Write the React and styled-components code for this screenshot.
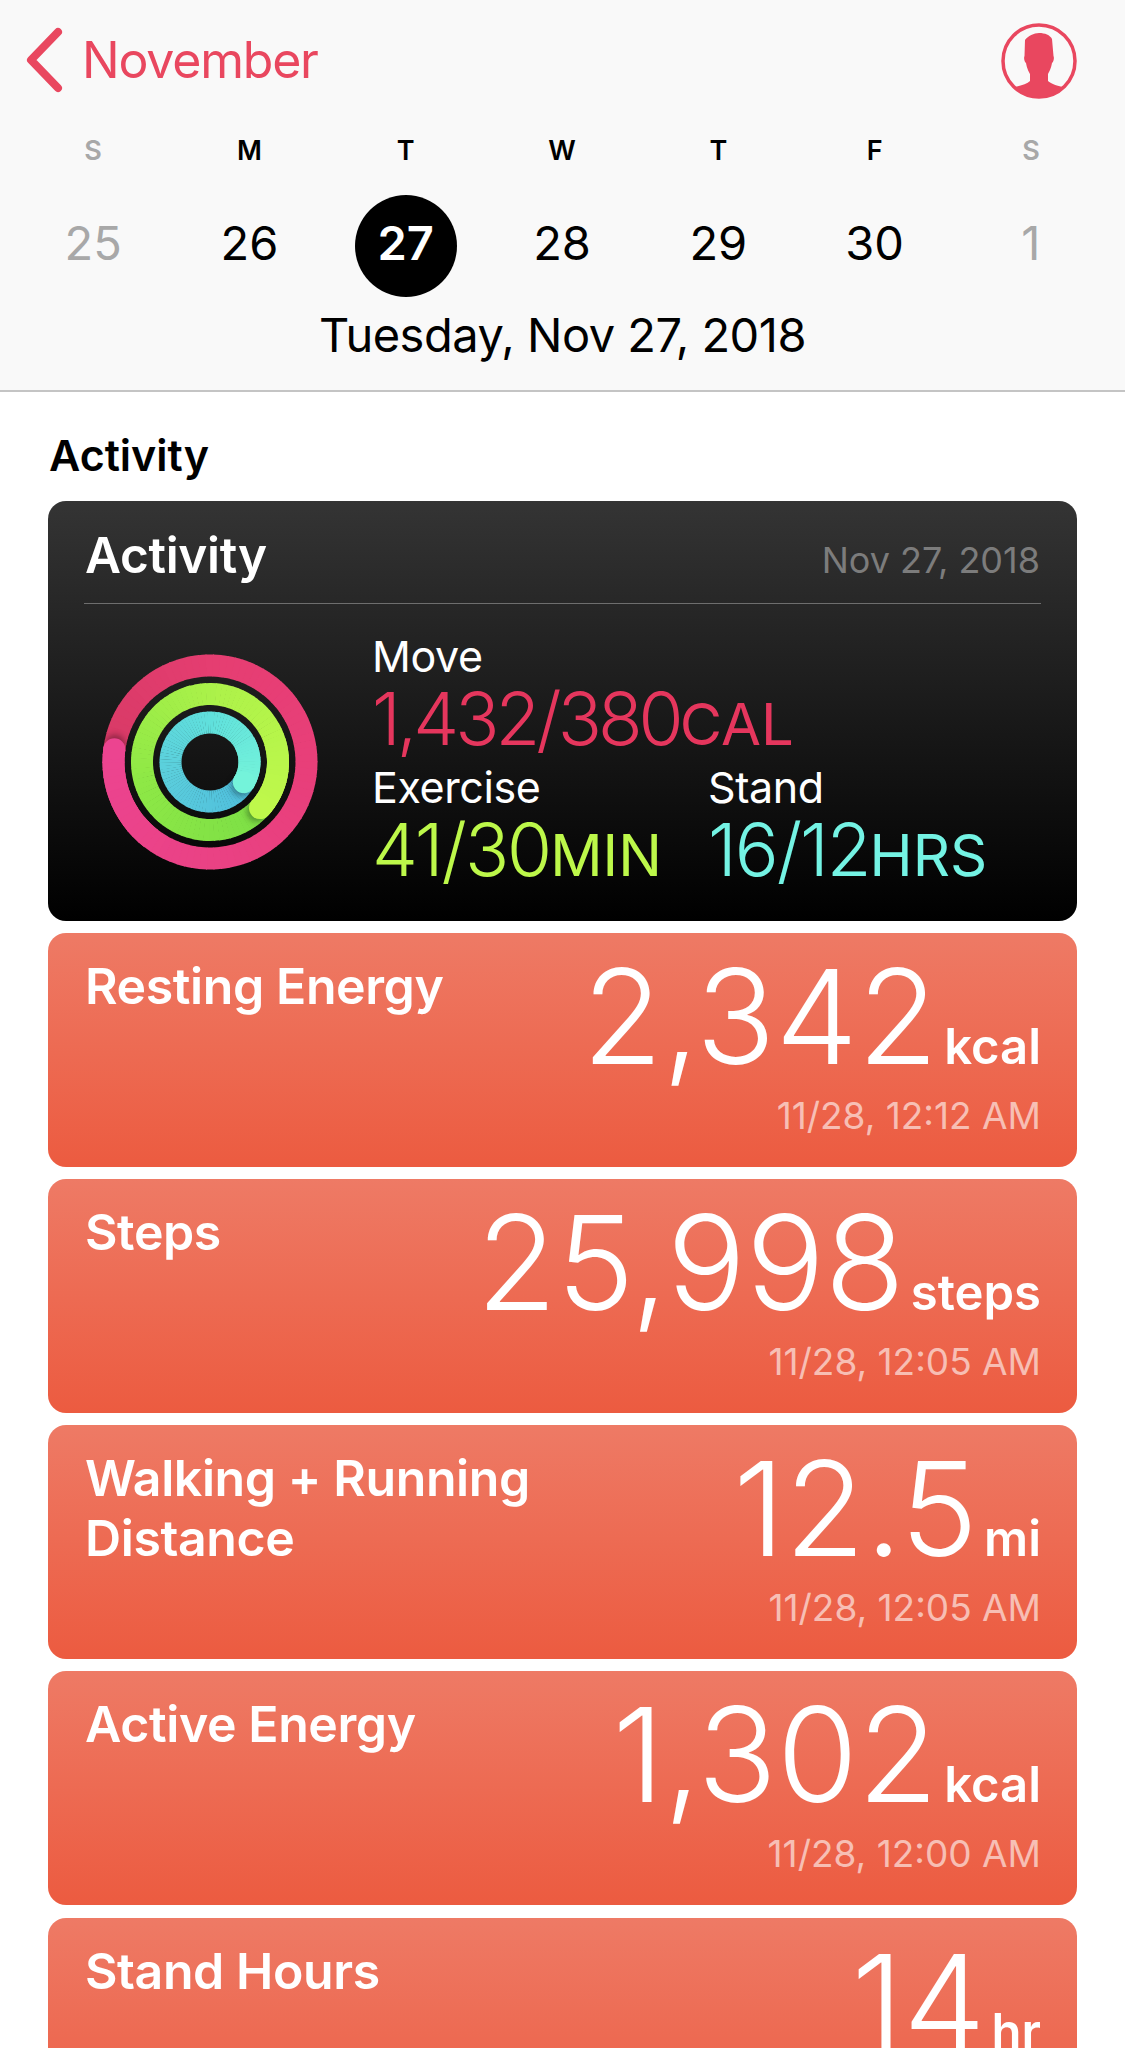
import React from 'react'
import styled, { createGlobalStyle } from 'styled-components'

const GlobalStyle = createGlobalStyle`
  html, body {
    margin: 0;
    padding: 0;
    background: #fff;
  }
  body {
    font-family: Inter, 'Liberation Sans', sans-serif;
  }
`

const Page = styled.div`
  width: 1125px;
  height: 2048px;
  overflow: hidden;
  background: #fff;
`

const Header = styled.header`
  height: 392px;
  box-sizing: border-box;
  background: #f9f9f9;
  border-bottom: 2px solid #c4c4c4;
`

const NavBar = styled.div`
  height: 122px;
  padding: 0 48px 0 24px;
  box-sizing: border-box;
  display: flex;
  align-items: center;
  justify-content: space-between;
`

const BackLink = styled.div`
  display: flex;
  align-items: center;
  gap: 18px;
  color: #e9475f;
  font-size: 50px;
  letter-spacing: -1.2px;
  line-height: 56px;
  padding-bottom: 2px;
`

const WeekGrid = styled.div`
  display: grid;
  grid-template-columns: repeat(7, 156.3px);
  padding-left: 15px;
  justify-items: center;
  align-items: center;
`

const DayLetter = styled.div`
  height: 56px;
  line-height: 58px;
  font-size: 27px;
  font-weight: 600;
  color: ${(p) => (p.$muted ? '#a8a8a8' : '#000')};
`

const DayNumber = styled.div`
  width: 102px;
  height: 102px;
  margin-top: 17px;
  padding-bottom: 8px;
  box-sizing: border-box;
  border-radius: 50%;
  display: flex;
  align-items: center;
  justify-content: center;
  font-size: 47px;
  font-weight: ${(p) => (p.$active ? 600 : 400)};
  color: ${(p) => (p.$active ? '#fff' : p.$muted ? '#a8a8a8' : '#000')};
  background: ${(p) => (p.$active ? '#000' : 'transparent')};
`

const DateLine = styled.div`
  margin-top: 9px;
  text-align: center;
  font-size: 47px;
  line-height: 58px;
  letter-spacing: -0.5px;
  color: #000;
`

const Content = styled.main`
  padding: 36px 48px 0;
`

const SectionTitle = styled.h2`
  margin: 0 0 19px 1px;
  font-size: 43px;
  line-height: 54px;
  font-weight: 600;
  color: #000;
`

const Cards = styled.div`
  display: flex;
  flex-direction: column;
  gap: 12.2px;
`

const ActivityCard = styled.section`
  height: 419.7px;
  flex: none;
  box-sizing: border-box;
  padding: 14px 36px 0;
  border-radius: 18px;
  background: linear-gradient(180deg, #343434 0%, #000 100%);
`

const ActivityHead = styled.div`
  height: 89px;
  box-sizing: border-box;
  padding: 0 1px 9px 0;
  display: flex;
  align-items: center;
  justify-content: space-between;
  border-bottom: 1px solid #6e6e6e;
`

const ActivityName = styled.div`
  font-size: 49.5px;
  font-weight: 600;
  color: #fff;
  padding-left: 1px;
  letter-spacing: -0.3px;
`

const ActivityDate = styled.div`
  font-size: 36px;
  color: #7c7c7c;
  padding-top: 11px;
`

const ActivityBody = styled.div`
  display: flex;
  padding-top: 27px;
`

const RingBox = styled.div`
  width: 288px;
  flex: none;
  padding: 21px 0 0 16px;
  box-sizing: border-box;
`

const Metrics = styled.div`
  display: grid;
  grid-template-columns: 336px auto;
  row-gap: 2px;
`

const Metric = styled.div`
  grid-column: ${(p) => (p.$wide ? '1 / span 2' : 'auto')};
`

const MetricLabel = styled.div`
  font-size: 43px;
  line-height: 51px;
  color: #fff;
  letter-spacing: -0.4px;
`

const MetricValue = styled.div`
  margin-top: 1px;
  font-size: 73px;
  line-height: 72px;
  font-weight: 350;
  letter-spacing: ${(p) => (p.$tight ? '-4px' : '-2px')};
  color: ${(p) => p.$color};
  white-space: nowrap;
`

const MetricUnit = styled.span`
  font-size: 58px;
  font-weight: 400;
  letter-spacing: 0;
`

const StatCard = styled.section`
  height: 234px;
  flex: none;
  box-sizing: border-box;
  padding: 21px 36px 0 37px;
  border-radius: 18px;
  display: flex;
  justify-content: space-between;
  color: #fff;
  background: linear-gradient(180deg, #ee7a65 0%, #ec5b40 100%);
`

const StatTitle = styled.div`
  margin-top: 2px;
  font-size: 50px;
  line-height: 60px;
  font-weight: 600;
  letter-spacing: -0.4px;
`

const StatRight = styled.div`
  display: flex;
  flex-direction: column;
  align-items: flex-end;
`

const StatReading = styled.div`
  display: flex;
  align-items: baseline;
  gap: 6px;
  height: 126px;
  line-height: 126px;
`

const StatValue = styled.span`
  font-size: 131px;
  font-weight: 300;
`

const StatUnit = styled.span`
  font-size: 49px;
  font-weight: 600;
`

const StatTime = styled.div`
  margin-top: 14px;
  font-size: 37px;
  line-height: 44px;
  color: rgba(255, 255, 255, 0.6);
`

const week = [
  { letter: 'S', day: 25, muted: true },
  { letter: 'M', day: 26 },
  { letter: 'T', day: 27, active: true },
  { letter: 'W', day: 28 },
  { letter: 'T', day: 29 },
  { letter: 'F', day: 30 },
  { letter: 'S', day: 1, muted: true },
]

const stats = [
  { title: ['Resting Energy'], value: '2,342', unit: 'kcal', time: '11/28, 12:12 AM' },
  { title: ['Steps'], value: '25,998', unit: 'steps', time: '11/28, 12:05 AM' },
  { title: ['Walking + Running', 'Distance'], value: '12.5', unit: 'mi', time: '11/28, 12:05 AM' },
  { title: ['Active Energy'], value: '1,302', unit: 'kcal', time: '11/28, 12:00 AM' },
  { title: ['Stand Hours'], value: '14', unit: 'hr', time: '' },
]

const rings = [
  { r: 96.5, head: 187.6, colors: ['#d83a66', '#e63e72', '#e83f7a', '#ea4285', '#ec4490'] },
  { r: 68, head: 42.7, colors: ['#7ddf46', '#8ee846', '#aef24a', '#bff84b'] },
  { r: 39.5, head: 31, colors: ['#4fbedc', '#5accdc', '#60e0dc', '#74f3da'] },
]

const SEGMENTS = 90

const polar = (r, deg) => {
  const a = (deg * Math.PI) / 180
  return [r * Math.cos(a), r * Math.sin(a)]
}

// colour at t (0..1) along the ring, going through the stops
const colorAt = (colors, t) => {
  const pos = t * (colors.length - 1)
  const i = Math.min(Math.floor(pos), colors.length - 2)
  const f = pos - i
  const a = parseInt(colors[i].slice(1), 16)
  const b = parseInt(colors[i + 1].slice(1), 16)
  const mix = (shift) => {
    const x = (a >> shift) & 255
    const y = (b >> shift) & 255
    return Math.round(x + (y - x) * f)
  }
  return `rgb(${mix(16)},${mix(8)},${mix(0)})`
}

const Ring = ({ r, head, colors }) => {
  const step = 360 / SEGMENTS
  const segs = Array.from({ length: SEGMENTS }, (_, i) => {
    const [x1, y1] = polar(r, head + i * step)
    const [x2, y2] = polar(r, head + (i + 1) * step + 0.5)
    return (
      <path
        key={i}
        d={`M ${x1} ${y1} A ${r} ${r} 0 0 1 ${x2} ${y2}`}
        fill="none"
        stroke={colorAt(colors, i / (SEGMENTS - 1))}
        strokeWidth="22"
      />
    )
  })
  const [capX, capY] = polar(r, head)
  const [shadowX, shadowY] = polar(r, head + 260 / r)
  return (
    <g>
      {segs}
      <circle cx={shadowX} cy={shadowY} r="10" fill="#000" opacity="0.35" filter="url(#capShadow)" />
      {segs.slice(-Math.round(SEGMENTS / 6))}
      <circle cx={capX} cy={capY} r="11" fill={colors[colors.length - 1]} />
    </g>
  )
}

const BackChevron = () => (
  <svg width="40" height="66" viewBox="0 0 40 66" fill="none">
    <path d="M34 5 L7 33 L34 61" stroke="#e9475f" strokeWidth="8" strokeLinecap="round" strokeLinejoin="round" />
  </svg>
)

const ProfileIcon = () => (
  <svg width="76" height="76" viewBox="0 0 76 76">
    <defs>
      <clipPath id="profile-clip">
        <circle cx="38" cy="38" r="36" />
      </clipPath>
    </defs>
    <circle cx="38" cy="38" r="36" fill="none" stroke="#e9475f" strokeWidth="3.5" />
    <path
      clipPath="url(#profile-clip)"
      fill="#e9475f"
      d="M24 17 C27 13 33 10 38 10 C44 10 49 12 51 16 L52.5 33 C53.5 35 52.5 39 51 40 C50 46 48 49 47 51 L47 58 C50 61 57 63 66 65 L66 80 L10 80 L10 65 C19 63 26 61 29 58 L29 51 C28 49 26 46 25 40 C23.5 39 22.5 35 23.5 33 Z"
    />
  </svg>
)

const Rings = () => (
  <svg width="220" height="220" viewBox="-110 -110 220 220">
    <defs>
      <filter id="capShadow" x="-60%" y="-60%" width="220%" height="220%">
        <feGaussianBlur stdDeviation="3" />
      </filter>
    </defs>
    {rings.map((ring) => (
      <Ring key={ring.r} {...ring} />
    ))}
  </svg>
)

const App = () => (
  <Page>
    <GlobalStyle />
    <Header>
      <NavBar>
        <BackLink>
          <BackChevron />
          November
        </BackLink>
        <ProfileIcon />
      </NavBar>
      <WeekGrid>
        {week.map((d, i) => (
          <DayLetter key={i} $muted={d.muted}>
            {d.letter}
          </DayLetter>
        ))}
        {week.map((d) => (
          <DayNumber key={d.day} $muted={d.muted} $active={d.active}>
            {d.day}
          </DayNumber>
        ))}
      </WeekGrid>
      <DateLine>Tuesday, Nov 27, 2018</DateLine>
    </Header>
    <Content>
      <SectionTitle>Activity</SectionTitle>
      <Cards>
        <ActivityCard>
          <ActivityHead>
            <ActivityName>Activity</ActivityName>
            <ActivityDate>Nov 27, 2018</ActivityDate>
          </ActivityHead>
          <ActivityBody>
            <RingBox>
              <Rings />
            </RingBox>
            <Metrics>
              <Metric $wide>
                <MetricLabel>Move</MetricLabel>
                <MetricValue $color="#e5365d" $tight>
                  1,432/380<MetricUnit>CAL</MetricUnit>
                </MetricValue>
              </Metric>
              <Metric>
                <MetricLabel>Exercise</MetricLabel>
                <MetricValue $color="#bdf84a">
                  41/30<MetricUnit>MIN</MetricUnit>
                </MetricValue>
              </Metric>
              <Metric>
                <MetricLabel>Stand</MetricLabel>
                <MetricValue $color="#74f3e4">
                  16/12<MetricUnit>HRS</MetricUnit>
                </MetricValue>
              </Metric>
            </Metrics>
          </ActivityBody>
        </ActivityCard>
        {stats.map((s) => (
          <StatCard key={s.unit + s.value}>
            <StatTitle>
              {s.title.map((line) => (
                <div key={line}>{line}</div>
              ))}
            </StatTitle>
            <StatRight>
              <StatReading>
                <StatValue>{s.value}</StatValue>
                <StatUnit>{s.unit}</StatUnit>
              </StatReading>
              <StatTime>{s.time}</StatTime>
            </StatRight>
          </StatCard>
        ))}
      </Cards>
    </Content>
  </Page>
)

export default App
